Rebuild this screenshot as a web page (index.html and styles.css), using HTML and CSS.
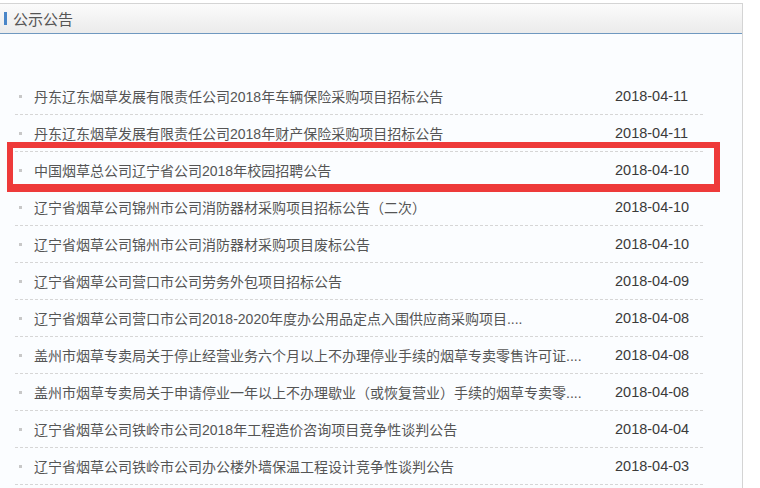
FILE: index.html
```html
<!DOCTYPE html>
<html lang="zh-CN">
<head>
    <meta charset="UTF-8">
    <title>公示公告</title>
<link rel="stylesheet" href="styles.css">
</head>
<body>
    <div class="panel">
        <div class="panel-head">
            <span class="bar"></span>公示公告
        </div>
        <ul class="news">
            <li><span class="title">丹东辽东烟草发展有限责任公司2018年车辆保险采购项目招标公告</span><span class="date">2018-04-11</span></li>
            <li><span class="title">丹东辽东烟草发展有限责任公司2018年财产保险采购项目招标公告</span><span class="date">2018-04-11</span></li>
            <li class="marked"><span class="title">中国烟草总公司辽宁省公司2018年校园招聘公告</span><span class="date">2018-04-10</span><span class="frame"></span></li>
            <li><span class="title">辽宁省烟草公司锦州市公司消防器材采购项目招标公告（二次）</span><span class="date">2018-04-10</span></li>
            <li><span class="title">辽宁省烟草公司锦州市公司消防器材采购项目废标公告</span><span class="date">2018-04-10</span></li>
            <li><span class="title">辽宁省烟草公司营口市公司劳务外包项目招标公告</span><span class="date">2018-04-09</span></li>
            <li><span class="title">辽宁省烟草公司营口市公司2018-2020年度办公用品定点入围供应商采购项目....</span><span class="date">2018-04-08</span></li>
            <li><span class="title">盖州市烟草专卖局关于停止经营业务六个月以上不办理停业手续的烟草专卖零售许可证....</span><span class="date">2018-04-08</span></li>
            <li><span class="title">盖州市烟草专卖局关于申请停业一年以上不办理歇业（或恢复营业）手续的烟草专卖零....</span><span class="date">2018-04-08</span></li>
            <li><span class="title">辽宁省烟草公司铁岭市公司2018年工程造价咨询项目竞争性谈判公告</span><span class="date">2018-04-04</span></li>
            <li><span class="title">辽宁省烟草公司铁岭市公司办公楼外墙保温工程设计竞争性谈判公告</span><span class="date">2018-04-03</span></li>
        </ul>
    </div>
</body>
</html>
```

FILE: styles.css
```css
body {
    margin: 0;
    background: #fff;
    font-family: "Liberation Sans", "Noto Sans CJK SC", sans-serif;
    overflow: hidden;
}

.panel {
    margin-top: 3px;
    width: 742px;
    height: 484px;
    overflow: hidden;
    border-top: 1px solid #d4d4d4;
    border-right: 1px solid #d4d4d4;
    background: #fbfdff;
}

.panel-head {
    display: flex;
    align-items: center;
    height: 29px;
    padding-left: 4px;
    border-bottom: 1px solid #6f98c0;
    background: linear-gradient(#fbfbfb, #ebebeb);
    color: #555;
    font-size: 15px;
}

.bar {
    width: 3px;
    height: 13px;
    margin-right: 6px;
    background: #4a86c8;
}

.news {
    list-style: none;
    margin: 44px 0 0 15px;
    padding: 0;
    width: 688px;
}

.news li {
    position: relative;
    display: flex;
    align-items: center;
    height: 36px;
    border-bottom: 1px dashed #d6d6d6;
    font-size: 14px;
}

.news li::before {
    content: "";
    width: 3px;
    height: 3px;
    margin: 0 12px 0 4px;
    background: #c8c8c8;
}

.title {
    flex: 1;
    color: #555;
    white-space: nowrap;
}

.date {
    width: 88px;
    color: #3a3a3a;
    font-size: 14.5px;
}

.frame {
    position: absolute;
    left: -8px;
    top: -10px;
    width: 701px;
    height: 36px;
    border: 6px solid #ee3a3a;
    border-bottom-width: 8px;
}
```
